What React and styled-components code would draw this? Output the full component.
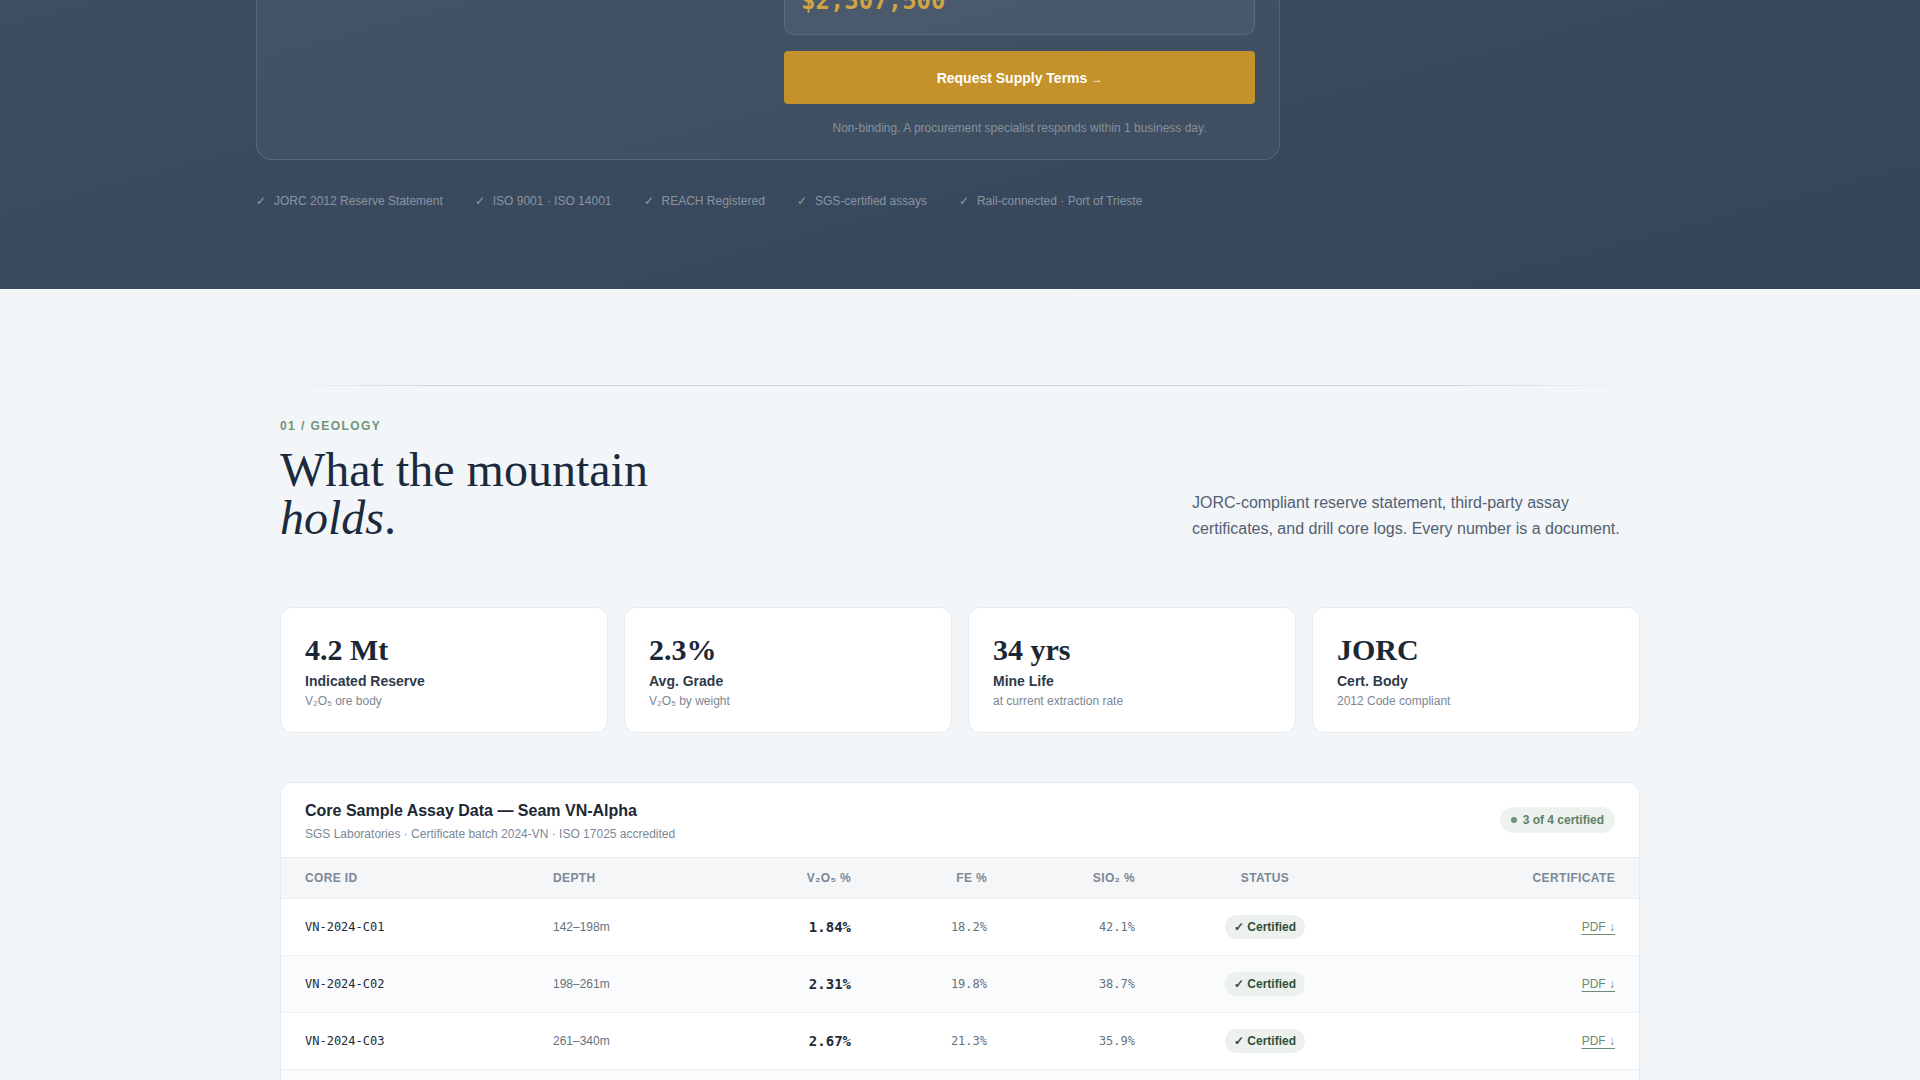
import styled, { createGlobalStyle } from "styled-components";

const GlobalStyle = createGlobalStyle`
  * {
    box-sizing: border-box;
  }

  body {
    margin: 0;
    background: #f3f6f9;
    font-family: "Liberation Sans", Arial, sans-serif;
    color: #1c2b3d;
    overflow: hidden;
  }
`;

const MONO = `"DejaVu Sans Mono", "Liberation Mono", monospace`;
const SERIF = `"Liberation Serif", "Times New Roman", serif`;

/* ---------- hero / supply calculator ---------- */

const Hero = styled.section`
  background: linear-gradient(165deg, #3f4f63 0%, #3a4a5e 45%, #34455a 100%);
  padding: 0 0 80px;
`;

const HeroInner = styled.div`
  width: 1408px;
  margin: 0 auto;
`;

const QuoteCard = styled.div`
  width: 1024px;
  margin-top: -78px;
  display: grid;
  grid-template-columns: 1fr 471px;
  gap: 40px;
  padding: 24px 24px 24px;
  border: 1px solid rgba(255, 255, 255, 0.12);
  border-radius: 16px;
  background: rgba(255, 255, 255, 0.035);
`;

const QuoteColumn = styled.div`
  display: flex;
  flex-direction: column;
  gap: 16px;
`;

const PriceBox = styled.div`
  height: 88px;
  padding: 18px 16px;
  border: 1px solid rgba(255, 255, 255, 0.1);
  border-radius: 10px;
  background: rgba(255, 255, 255, 0.05);
`;

const PriceLabel = styled.div`
  font-size: 11px;
  line-height: 16px;
  letter-spacing: 0.08em;
  text-transform: uppercase;
  color: rgba(255, 255, 255, 0.45);
  margin-bottom: 4px;
`;

const PriceValue = styled.div`
  font-family: ${MONO};
  font-weight: 700;
  font-size: 24px;
  line-height: 30px;
  color: #d2a442;
`;

const RequestButton = styled.button`
  height: 53px;
  border: 0;
  border-radius: 4px;
  background: #c4922b;
  color: #ffffff;
  font-family: "Liberation Sans", Arial, sans-serif;
  font-weight: 700;
  font-size: 14px;
  cursor: pointer;
`;

const Arrow = styled.span`
  font-size: 11px;
  margin-left: 4px;
`;

const QuoteNote = styled.p`
  margin: 1px 0 0;
  text-align: center;
  font-size: 12px;
  line-height: 14px;
  color: rgba(255, 255, 255, 0.38);
`;

const TrustRow = styled.ul`
  list-style: none;
  display: flex;
  gap: 32px;
  margin: 33px 0 0;
  padding: 0;
`;

const TrustItem = styled.li`
  display: flex;
  gap: 8px;
  font-size: 12px;
  line-height: 16px;
  color: rgba(255, 255, 255, 0.42);

  &::before {
    content: "✓";
    color: #93b39a;
    opacity: 0.85;
  }
`;

/* ---------- geology section ---------- */

const Section = styled.section`
  width: 1360px;
  margin: 0 auto;
  padding-top: 96px;
`;

const Divider = styled.div`
  height: 1px;
  background: linear-gradient(
    90deg,
    rgba(203, 211, 220, 0) 0%,
    #cbd3dc 12%,
    #cbd3dc 85%,
    rgba(203, 211, 220, 0) 100%
  );
`;

const SectionHead = styled.div`
  display: flex;
  justify-content: space-between;
  align-items: flex-end;
  margin-top: 33px;
`;

const Eyebrow = styled.div`
  font-size: 12px;
  line-height: 14px;
  font-weight: 700;
  letter-spacing: 0.12em;
  color: #6f9378;
`;

const Heading = styled.h2`
  margin: 13px 0 0;
  font-family: ${SERIF};
  font-weight: 400;
  font-size: 48px;
  line-height: 48px;
  color: #1b2a3c;

  em {
    font-style: italic;
  }
`;

const Lede = styled.p`
  width: 448px;
  margin: 0;
  font-size: 16px;
  line-height: 26px;
  color: #526071;
`;

const StatGrid = styled.div`
  display: grid;
  grid-template-columns: repeat(4, 1fr);
  gap: 16px;
  margin-top: 65px;
`;

const StatCard = styled.div`
  height: 126px;
  padding: 24px;
  background: #ffffff;
  border: 1px solid #e6ebf0;
  border-radius: 12px;
`;

const StatValue = styled.div`
  font-family: ${SERIF};
  font-weight: 700;
  font-size: 30px;
  line-height: 36px;
  color: #1b2735;
`;

const StatLabel = styled.div`
  margin-top: 4px;
  font-size: 14px;
  line-height: 18px;
  font-weight: 700;
  color: #2e3a49;
`;

const StatNote = styled.div`
  margin-top: 3px;
  font-size: 12px;
  line-height: 16px;
  color: #7b8795;
`;

/* ---------- assay table ---------- */

const TableCard = styled.div`
  margin-top: 49px;
  background: #ffffff;
  border: 1px solid #e6ebf0;
  border-radius: 12px;
  overflow: hidden;
`;

const TableHeader = styled.div`
  display: flex;
  justify-content: space-between;
  align-items: center;
  padding: 18px 24px 15px;
  border-bottom: 1px solid #e6ebf0;
`;

const TableTitle = styled.h3`
  margin: 0;
  font-size: 16px;
  line-height: 20px;
  font-weight: 700;
  color: #1b2735;
`;

const TableSub = styled.div`
  margin-top: 5px;
  font-size: 12px;
  line-height: 16px;
  color: #7b8795;
`;

const CountBadge = styled.span`
  display: inline-flex;
  align-items: center;
  gap: 6px;
  height: 26px;
  margin-bottom: 4px;
  padding: 0 11px;
  border-radius: 13px;
  background: #edf2ee;
  color: #5f8067;
  font-size: 12px;
  font-weight: 700;

  &::before {
    content: "";
    width: 6px;
    height: 6px;
    border-radius: 50%;
    background: #6f9378;
  }
`;

const COLUMNS = "248px 176px 146px 136px 148px 212px 1fr";

const Row = styled.div`
  display: grid;
  grid-template-columns: ${COLUMNS};
  align-items: center;
  height: ${(p) => (p.$head ? "41px" : "57px")};
  padding: 0 24px;
  background: ${(p) => (p.$head ? "#f4f6f8" : p.$alt ? "#fafbfc" : "#ffffff")};
  border-bottom: 1px solid #edf0f3;
`;

const HeadCell = styled.div`
  font-size: 12px;
  font-weight: 700;
  letter-spacing: 0.03em;
  text-transform: uppercase;
  color: #7c8896;
  text-align: ${(p) => p.$align || "left"};
  padding-right: ${(p) => (p.$num ? "24px" : "0")};
`;

const Cell = styled.div`
  font-family: ${(p) => (p.$mono ? MONO : `"Liberation Sans", Arial, sans-serif`)};
  font-size: ${(p) => (p.$strong ? "14px" : "12px")};
  font-weight: ${(p) => (p.$strong ? 700 : 400)};
  color: ${(p) => (p.$strong || p.$dark ? "#1e2a38" : "#667281")};
  text-align: ${(p) => (p.$num ? "right" : "left")};
  padding-right: ${(p) => (p.$num ? "24px" : "0")};
`;

const StatusCell = styled.div`
  display: flex;
  justify-content: center;
`;

const StatusPill = styled.span`
  display: inline-flex;
  align-items: center;
  height: 24px;
  padding: 0 9px;
  border-radius: 12px;
  background: ${(p) => (p.$pending ? "#f6efe0" : "#edf1ee")};
  color: ${(p) => (p.$pending ? "#96702a" : "#2f4f3a")};
  font-size: 12px;
  font-weight: 700;
`;

const PdfLink = styled.a`
  justify-self: end;
  font-size: 12px;
  color: #6c8a72;
  text-decoration: underline;
  text-underline-offset: 3px;
`;

const trustItems = [
  "JORC 2012 Reserve Statement",
  "ISO 9001 · ISO 14001",
  "REACH Registered",
  "SGS-certified assays",
  "Rail-connected · Port of Trieste",
];

const stats = [
  { value: "4.2 Mt", label: "Indicated Reserve", note: "V₂O₅ ore body" },
  { value: "2.3%", label: "Avg. Grade", note: "V₂O₅ by weight" },
  { value: "34 yrs", label: "Mine Life", note: "at current extraction rate" },
  { value: "JORC", label: "Cert. Body", note: "2012 Code compliant" },
];

const samples = [
  { id: "VN-2024-C01", depth: "142–198m", v: "1.84%", fe: "18.2%", si: "42.1%", ok: true },
  { id: "VN-2024-C02", depth: "198–261m", v: "2.31%", fe: "19.8%", si: "38.7%", ok: true },
  { id: "VN-2024-C03", depth: "261–340m", v: "2.67%", fe: "21.3%", si: "35.9%", ok: true },
  { id: "VN-2024-C04", depth: "340–412m", v: "2.12%", fe: "20.4%", si: "37.2%", ok: false },
];

export default function App() {
  return (
    <>
      <GlobalStyle />
      <Hero>
        <HeroInner>
          <QuoteCard>
            <div />
            <QuoteColumn>
              <PriceBox>
                <PriceLabel>Indicative contract value</PriceLabel>
                <PriceValue>$2,307,500</PriceValue>
              </PriceBox>
              <RequestButton>
                Request Supply Terms<Arrow>→</Arrow>
              </RequestButton>
              <QuoteNote>
                Non-binding. A procurement specialist responds within 1 business day.
              </QuoteNote>
            </QuoteColumn>
          </QuoteCard>
          <TrustRow>
            {trustItems.map((t) => (
              <TrustItem key={t}>{t}</TrustItem>
            ))}
          </TrustRow>
        </HeroInner>
      </Hero>

      <Section>
        <Divider />
        <SectionHead>
          <div>
            <Eyebrow>01 / GEOLOGY</Eyebrow>
            <Heading>
              What the mountain
              <br />
              <em>holds</em>.
            </Heading>
          </div>
          <Lede>
            JORC-compliant reserve statement, third-party assay certificates, and
            drill core logs. Every number is a document.
          </Lede>
        </SectionHead>

        <StatGrid>
          {stats.map((s) => (
            <StatCard key={s.label}>
              <StatValue>{s.value}</StatValue>
              <StatLabel>{s.label}</StatLabel>
              <StatNote>{s.note}</StatNote>
            </StatCard>
          ))}
        </StatGrid>

        <TableCard>
          <TableHeader>
            <div>
              <TableTitle>Core Sample Assay Data — Seam VN-Alpha</TableTitle>
              <TableSub>
                SGS Laboratories · Certificate batch 2024-VN · ISO 17025 accredited
              </TableSub>
            </div>
            <CountBadge>3 of 4 certified</CountBadge>
          </TableHeader>

          <Row $head>
            <HeadCell>Core ID</HeadCell>
            <HeadCell>Depth</HeadCell>
            <HeadCell $align="right" $num>
              V₂O₅ %
            </HeadCell>
            <HeadCell $align="right" $num>
              Fe %
            </HeadCell>
            <HeadCell $align="right" $num>
              SiO₂ %
            </HeadCell>
            <HeadCell $align="center">Status</HeadCell>
            <HeadCell $align="right">Certificate</HeadCell>
          </Row>

          {samples.map((s, i) => (
            <Row key={s.id} $alt={i % 2 === 1}>
              <Cell $mono $dark>
                {s.id}
              </Cell>
              <Cell>{s.depth}</Cell>
              <Cell $mono $strong $num>
                {s.v}
              </Cell>
              <Cell $mono $num>
                {s.fe}
              </Cell>
              <Cell $mono $num>
                {s.si}
              </Cell>
              <StatusCell>
                <StatusPill $pending={!s.ok}>{s.ok ? "✓ Certified" : "◷ Pending"}</StatusPill>
              </StatusCell>
              <PdfLink href="#">PDF ↓</PdfLink>
            </Row>
          ))}
        </TableCard>
      </Section>
    </>
  );
}
